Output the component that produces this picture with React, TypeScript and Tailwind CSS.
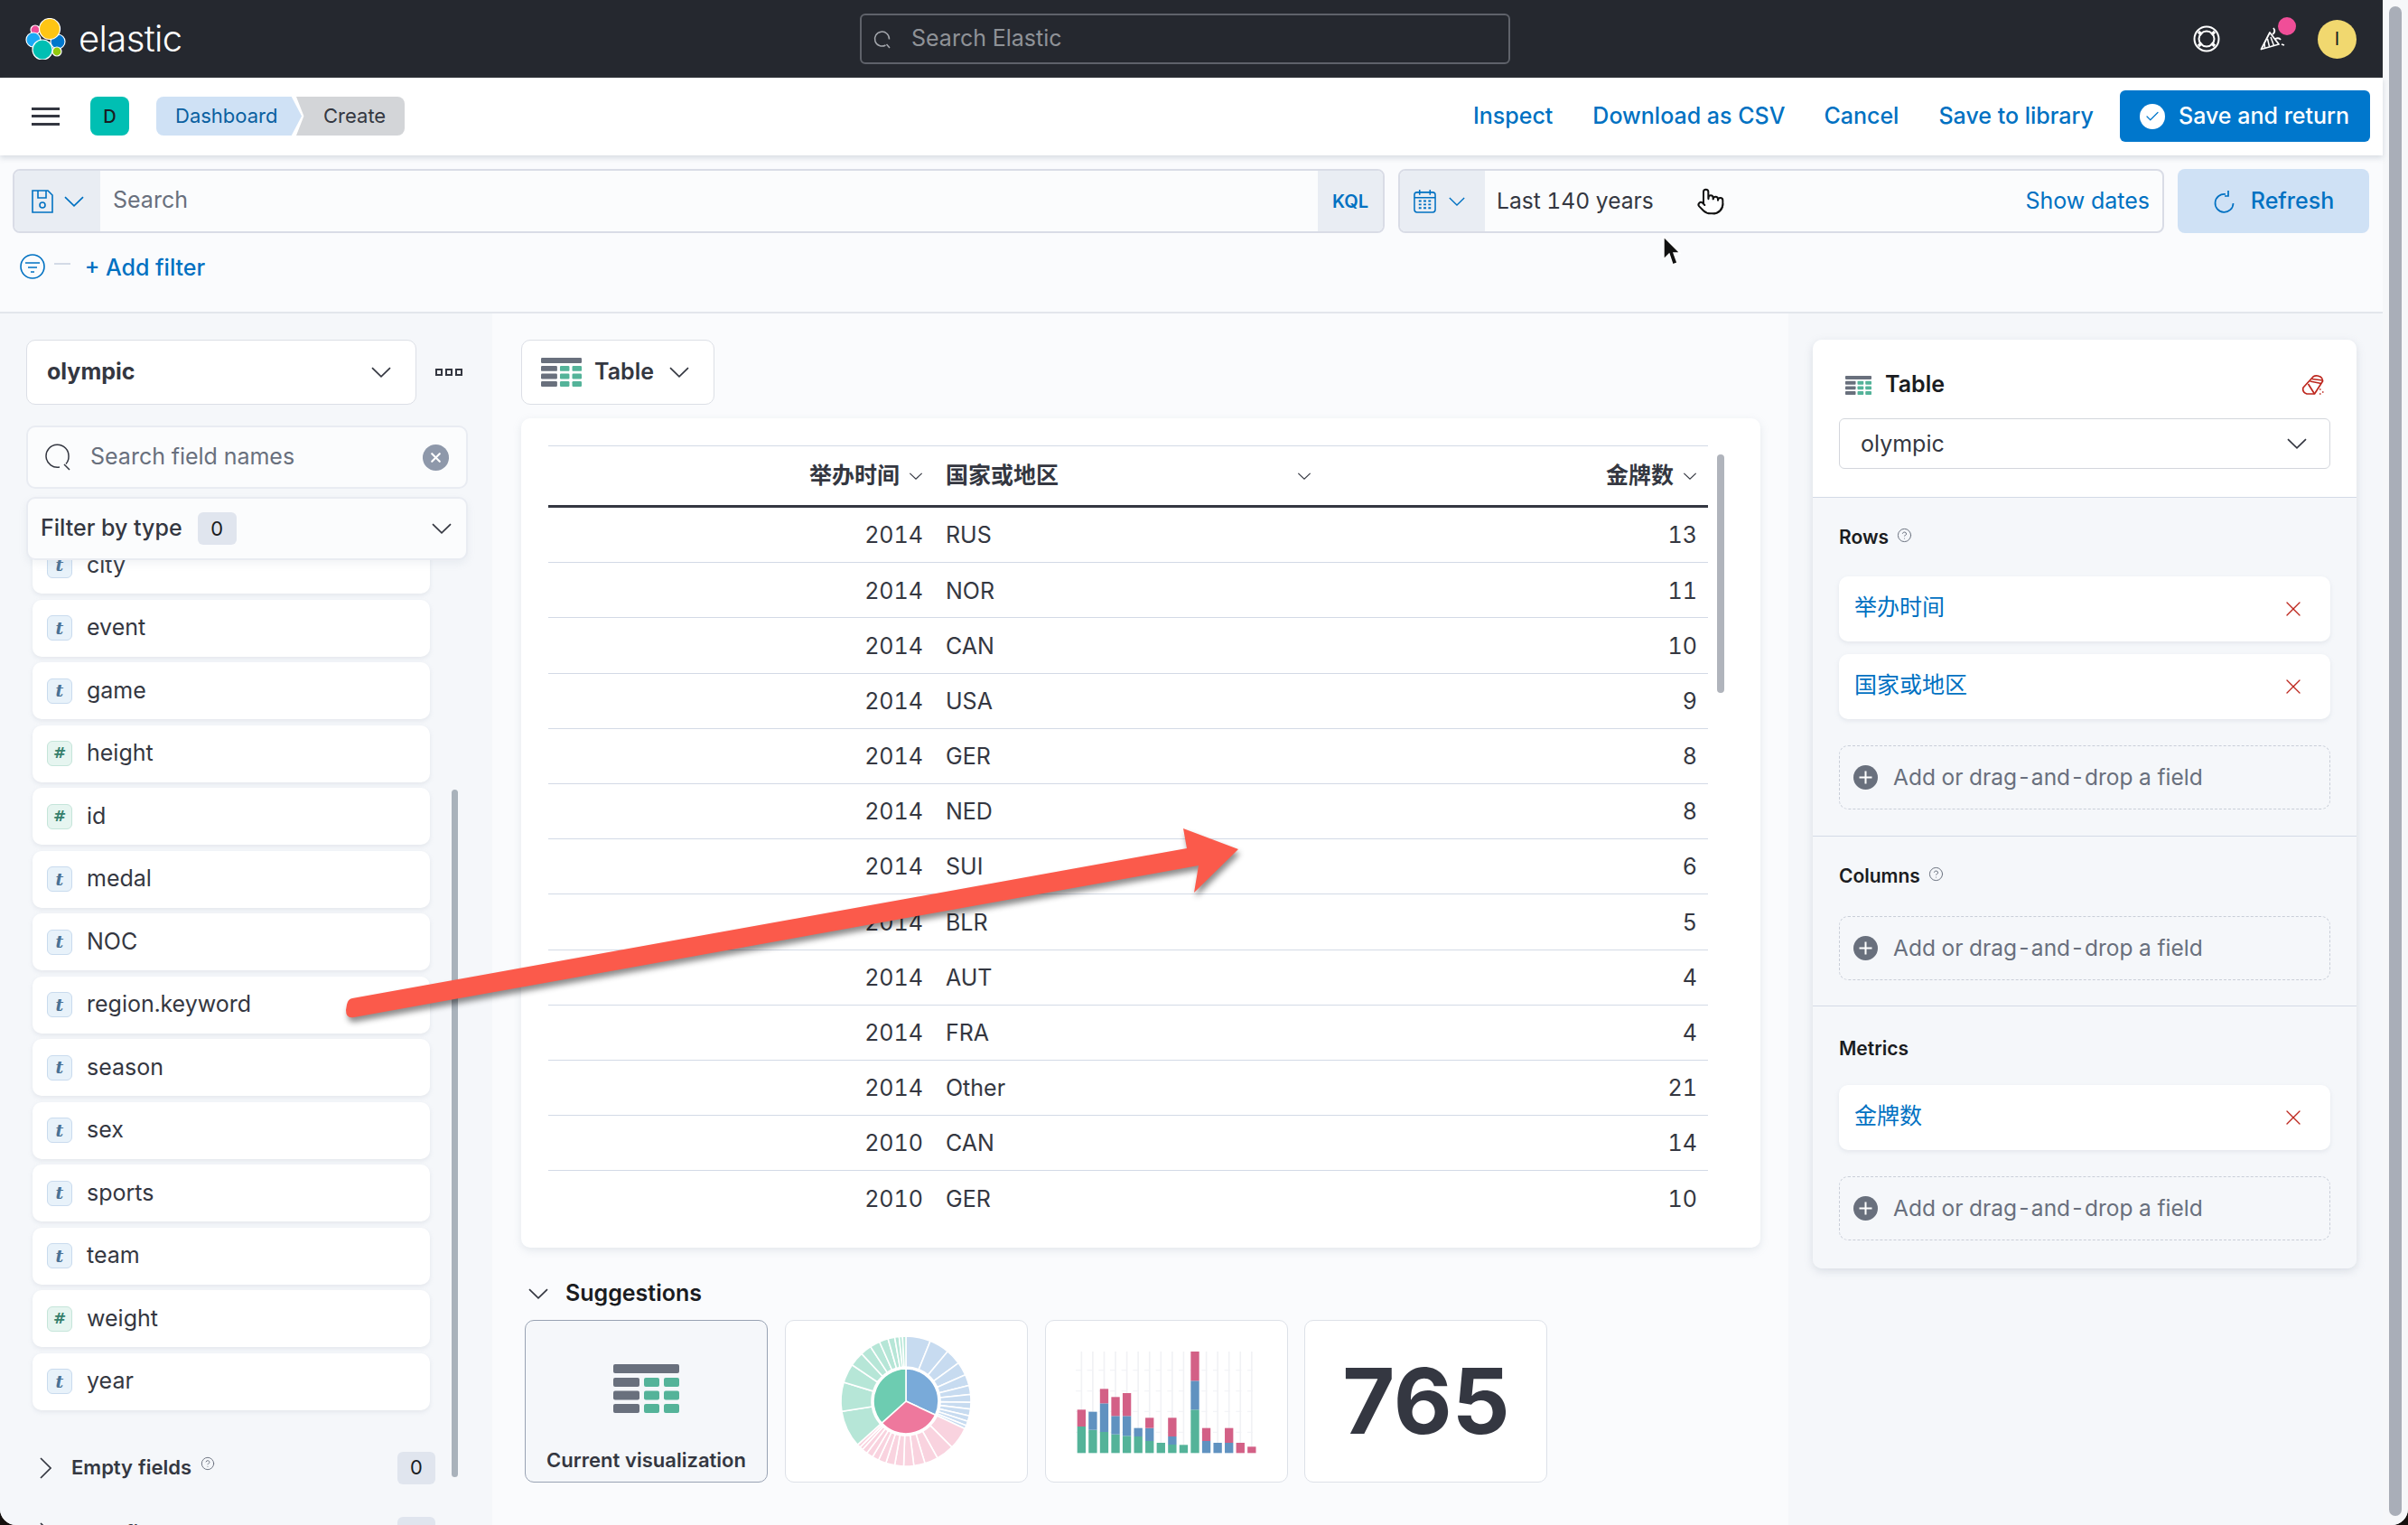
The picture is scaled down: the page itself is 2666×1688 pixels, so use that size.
import React from "react";
import { X, CircleHelp, Check, Pointer } from "lucide-react";

const fields: [string, string][] = [
  ["city", "t"], ["event", "t"], ["game", "t"], ["height", "#"], ["id", "#"], ["medal", "t"], ["NOC", "t"],
  ["region.keyword", "t"], ["season", "t"], ["sex", "t"], ["sports", "t"], ["team", "t"], ["weight", "#"], ["year", "t"],
];
const rows: [string, string, string][] = [
  ["2014", "RUS", "13"], ["2014", "NOR", "11"], ["2014", "CAN", "10"], ["2014", "USA", "9"], ["2014", "GER", "8"],
  ["2014", "NED", "8"], ["2014", "SUI", "6"], ["2014", "BLR", "5"], ["2014", "AUT", "4"], ["2014", "FRA", "4"],
  ["2014", "Other", "21"], ["2010", "CAN", "14"], ["2010", "GER", "10"],
];

function TableIcon({ className }: { className: string }) {
  return (
    <svg viewBox="0 0 73 54" className={className} preserveAspectRatio="none">
      <rect x="0" y="0" width="73" height="10" rx="2" fill="#69707d" />
      {[15, 29.5, 44].map((y) => (
        <g key={y}>
          <rect x="0" y={y} width="29" height="10" rx="2" fill="#69707d" />
          <rect x="34" y={y} width="17" height="10" rx="2" fill="#54b399" />
          <rect x="56" y={y} width="17" height="10" rx="2" fill="#54b399" />
        </g>
      ))}
    </svg>
  );
}

function Logo() {
  return (
    <svg viewBox="0 0 46 46" className="h-[46px] w-[46px]">
      <g stroke="#fff" strokeWidth="1.2">
        <circle cx="11" cy="13" r="5" fill="#f04e98" />
        <circle cx="9" cy="24" r="8" fill="#1ba9f5" />
        <circle cx="36" cy="26" r="8" fill="#0077cc" />
        <circle cx="35" cy="37" r="5" fill="#93c90e" />
        <circle cx="27" cy="12" r="11.5" fill="#fec514" />
        <circle cx="19" cy="35" r="11" fill="#00bfb3" />
      </g>
    </svg>
  );
}

function polar(r: number, deg: number) {
  const a = ((deg - 90) * Math.PI) / 180;
  return `${(80 + r * Math.cos(a)).toFixed(2)} ${(80 + r * Math.sin(a)).toFixed(2)}`;
}
function arc(r0: number, r1: number, a0: number, a1: number) {
  const large = a1 - a0 > 180 ? 1 : 0;
  return `M${polar(r0, a0)} L${polar(r1, a0)} A${r1} ${r1} 0 ${large} 1 ${polar(r1, a1)} L${polar(r0, a1)} A${r0} ${r0} 0 ${large} 0 ${polar(r0, a0)} Z`;
}
function Donut() {
  const groups: { start: number; color: string; w: number[] }[] = [
    { start: 0, color: "#c7dbf0", w: [22, 18, 14, 12, 10, 8, 7, 6, 6, 5, 4, 3] },
    { start: 115, color: "#f9d3df", w: [20, 16, 12, 10, 9, 8, 8, 7, 6, 6, 5, 3, 3] },
    { start: 228, color: "#b6e6d7", w: [33, 26, 17, 13, 10, 9, 8, 6, 4, 3, 3] },
  ];
  const segs: React.ReactElement[] = [];
  groups.forEach((g) => {
    let a = g.start;
    g.w.forEach((w, i) => {
      segs.push(<path key={`${g.start}-${i}`} d={arc(38, 72, a, a + w)} fill={g.color} stroke="#fff" strokeWidth="1.6" />);
      a += w;
    });
  });
  return (
    <svg viewBox="0 0 160 160" className="h-[160px] w-[160px]">
      {segs}
      <path d={arc(0.01, 36, 0, 115)} fill="#79aad9" stroke="#fff" strokeWidth="1.6" />
      <path d={arc(0.01, 36, 115, 228)} fill="#ee789d" stroke="#fff" strokeWidth="1.6" />
      <path d={arc(0.01, 36, 228, 360)} fill="#6dccb1" stroke="#fff" strokeWidth="1.6" />
    </svg>
  );
}

function Bars() {
  const data = [
    [88, 0, 56], [77, 60, 0], [70, 95, 48], [62, 61, 63], [57, 66, 76], [55, 28, 0], [40, 43, 34], [34, 0, 0],
    [28, 27, 62], [27, 0, 0], [144, 96, 97], [0, 40, 43], [0, 34, 0], [0, 34, 49], [0, 0, 34], [0, 0, 21],
  ];
  const base = 382;
  return (
    <svg viewBox="0 0 780 420" className="h-[140px] w-[260px]">
      {[107, 176, 244, 313].map((y) => (
        <line key={y} x1="90" x2="690" y1={y} y2={y} stroke="#f3f4f7" strokeWidth="4" strokeDasharray="18 20" />
      ))}
      {data.map((_, i) => (
        <line key={i} x1={109 + i * 37.7} x2={109 + i * 37.7} y1="45" y2={base} stroke="#f1f2f5" strokeWidth="5" />
      ))}
      {data.map(([g, b, r], i) => {
        const x = 95 + i * 37.7;
        return (
          <g key={i}>
            <rect x={x} y={base - g} width="28" height={g} fill="#54b399" />
            <rect x={x} y={base - g - b} width="28" height={b} fill="#6092c0" />
            <rect x={x} y={base - g - b - r} width="28" height={r} fill="#d36086" />
          </g>
        );
      })}
    </svg>
  );
}

function Help({ className }: { className: string }) {
  return <CircleHelp className={className} strokeWidth={1.4} color="#69707d" />;
}

function Chevron({ className, color = "#343741" }: { className: string; color?: string }) {
  return (
    <svg viewBox="0 0 22 12" className={className} fill="none" stroke={color} strokeWidth="1.7">
      <path d="M1 1.2 L11 10.8 L21 1.2" />
    </svg>
  );
}

function AddField() {
  return (
    <div className="flex h-[71px] items-center rounded-[10px] border border-dashed border-[#c9ced8] pl-[15px]">
      <svg viewBox="0 0 27 27" className="h-[27px] w-[27px]">
        <circle cx="13.5" cy="13.5" r="13.5" fill="#69707d" />
        <path d="M13.5 6.5v14M6.5 13.5h14" stroke="#fff" strokeWidth="2" />
      </svg>
      <span className="ml-[17px] text-[24.5px] text-[#69707d]">Add or drag-and-drop a field</span>
    </div>
  );
}

function FieldPill({ label }: { label: string }) {
  return (
    <div className="flex h-[72px] items-center justify-between rounded-[10px] bg-white pl-[17px] pr-[27px] shadow-[0_2px_5px_rgba(152,162,179,0.18)]">
      <span className="-mt-[2px] text-[25px] text-[#0071c2]">{label}</span>
      <X className="h-[28px] w-[28px]" color="#bd271e" strokeWidth={1.1} />
    </div>
  );
}

function PanelLabel({ label, help }: { label: string; help?: boolean }) {
  return (
    <div className="flex h-[28px] items-center text-[21px] font-semibold text-[#1a1c21]">
      {label}
      {help && <Help className="ml-[9px] -mt-[6px] h-[17px] w-[17px]" />}
    </div>
  );
}

function HeaderCell({ label, className, chevron }: { label: string; className: string; chevron: string }) {
  return (
    <div className={className}>
      <span className="text-[25px] font-semibold text-[#343741]">{label}</span>
      <Chevron className={chevron} />
    </div>
  );
}

export default function App() {
  return (
    <div className="relative h-[1688px] w-[2666px] overflow-hidden bg-[#15100e] font-[Inter,'Noto_Sans_CJK_SC',sans-serif] tabular-nums text-[#343741]">
      <div className="flex h-full w-full overflow-hidden rounded-b-[18px] bg-[#f6f7f9]">
        <div className="flex h-full w-[2638px] flex-col">
          {/* top bar */}
          <header className="flex h-[86px] shrink-0 items-center bg-[#25282f]">
            <div className="flex w-[952px] items-center pl-[28px]">
              <Logo />
              <span className="ml-[13px] text-[40px] font-light leading-none tracking-[-0.6px] text-white">elastic</span>
            </div>
            <div className="flex h-[56px] w-[720px] items-center rounded-[6px] border-2 border-[#5f626a] pl-[12px]">
              <svg viewBox="0 0 24 24" className="h-[24px] w-[24px]" fill="none" stroke="#a4a7ad" strokeWidth="1.5">
                <path d="M14.5 19a8 8 0 1 1 4-6.5M15.5 18l3.5 4" />
              </svg>
              <span className="ml-[19px] text-[25px] text-[#8f9297]">Search Elastic</span>
            </div>
            <div className="flex flex-1 items-center justify-end">
              <svg viewBox="0 0 30 30" className="h-[30px] w-[30px]" fill="none" stroke="#fff" strokeWidth="2">
                <circle cx="15" cy="15" r="13.5" />
                <circle cx="15" cy="15" r="8.5" />
                <path d="M6 7l3.5 3.5M24 7l-3.5 3.5M6 23l3.5-3.5M24 23l-3.5-3.5" strokeWidth="3.2" />
              </svg>
              <div className="relative ml-[44px] h-[26px] w-[28px]">
                <svg viewBox="0 0 28 26" className="h-[26px] w-[28px]" fill="none" stroke="#fff" strokeWidth="1.8" strokeLinejoin="round">
                  <path d="M1.5 24.5 L11 6 L21 19 Z" />
                  <path d="M5.5 23 L5 17 M10.5 21.5 L8.5 13 M15.5 20.5 L12 11" strokeWidth="1.5" />
                  <path d="M14 8 q4-3 1-7 M17 13 q4-2 6 1 M24 19 l3 1" />
                </svg>
                <span className="absolute -right-[12px] -top-[11px] h-[20px] w-[20px] rounded-full bg-[#f04e98]" />
              </div>
              <div className="ml-[36px] mr-[29px] flex h-[43px] w-[43px] items-center justify-center rounded-full bg-[#f1d86f] text-[20px] text-[#1a1c21]">I</div>
            </div>
          </header>

          {/* app nav */}
          <nav className="z-10 flex h-[86px] shrink-0 items-center bg-white pb-[1px] pl-[35px] pr-[14px] shadow-[0_3px_6px_rgba(152,162,179,0.35)]">
            <div className="flex h-[20px] w-[31px] flex-col justify-between">
              <span className="h-[3px] bg-[#343741]" />
              <span className="h-[3px] bg-[#343741]" />
              <span className="h-[3px] bg-[#343741]" />
            </div>
            <div className="ml-[34px] flex h-[43px] w-[43px] items-center justify-center rounded-[8px] bg-[#00bfb3] text-[20px] font-medium text-[#1a1c21]">D</div>
            <div className="ml-[30px] flex h-[43px] items-center text-[22px]">
              <div className="flex h-full w-[161px] items-center rounded-l-[8px] bg-[#cfe1f5] pl-[21px] text-[#0a5fa0] [clip-path:polygon(0_0,93%_0,100%_50%,93%_100%,0_100%)]">Dashboard</div>
              <div className="-ml-[6px] flex h-full w-[120px] items-center rounded-r-[8px] bg-[#d3d5d8] pl-[30px] text-[#343741] [clip-path:polygon(0_0,100%_0,100%_100%,0_100%,7%_50%)]">Create</div>
            </div>
            <div className="ml-auto flex items-center text-[25px] font-medium text-[#0071c2]">
              <span>Inspect</span>
              <span className="ml-[44px]">Download as CSV</span>
              <span className="ml-[43px]">Cancel</span>
              <span className="ml-[44px]">Save to library</span>
              <button className="ml-[29px] flex h-[57px] w-[277px] items-center rounded-[6px] bg-[#0077cc] pl-[22px] font-medium text-white">
                <span className="flex h-[28px] w-[28px] items-center justify-center rounded-full bg-white">
                  <Check className="h-[18px] w-[18px]" color="#0077cc" strokeWidth={1.6} />
                </span>
                <span className="ml-[15px]">Save and return</span>
              </button>
            </div>
          </nav>

          {/* query + filter */}
          <div className="h-[175px] shrink-0 border-b-2 border-[#e3e6ec] bg-[#fafbfd]">
            <div className="mt-[15px] flex h-[71px] gap-[15px] pl-[14px]">
              <div className="flex w-[1519px] overflow-hidden rounded-[8px] border-2 border-[#d9dce6] bg-[#fbfcfd]">
                <div className="flex w-[95px] items-center justify-center gap-[12px] bg-[#e9edf3]">
                  <svg viewBox="0 0 24 26" className="h-[26px] w-[24px]" fill="none" stroke="#0071c2" strokeWidth="1.6">
                    <path d="M1 1h17l5 5v19H1zM7 1v8h9V1" />
                    <circle cx="12" cy="17" r="3" />
                  </svg>
                  <Chevron className="h-[12px] w-[22px]" color="#0071c2" />
                </div>
                <div className="flex flex-1 items-center pb-[2px] pl-[14px] text-[25px] text-[#69707d]">Search</div>
                <div className="flex w-[72px] items-center justify-center bg-[#e9edf3] text-[20px] font-semibold text-[#0071c2]">KQL</div>
              </div>
              <div className="flex w-[848px] overflow-hidden rounded-[8px] border-2 border-[#d9dce6] bg-[#fbfcfd]">
                <div className="flex w-[94px] items-center gap-[14px] bg-[#e9edf3] pl-[15px]">
                  <svg viewBox="0 0 26 28" className="h-[27px] w-[25px]" fill="none" stroke="#0071c2" strokeWidth="1.6">
                    <rect x="1" y="4" width="24" height="23" rx="3" />
                    <path d="M1 10h24M7 1v6M19 1v6" />
                    <path d="M6 14h3M11.5 14h3M17 14h3M6 18h3M11.5 18h3M17 18h3M6 22h3M11.5 22h3M17 22h3" strokeWidth="2" />
                  </svg>
                  <Chevron className="h-[10px] w-[18px]" color="#0071c2" />
                </div>
                <div className="flex flex-1 items-center justify-between pl-[13px] pr-[14px] text-[25px]">
                  <span className="text-[24.6px] text-[#343741]">Last 140 years</span>
                  <span className="text-[#0071c2]">Show dates</span>
                </div>
              </div>
              <button className="flex h-[71px] w-[212px] items-center justify-center gap-[18px] rounded-[8px] bg-[#cfe1f5] text-[25px] font-medium text-[#0071c2]">
                <svg viewBox="0 0 24 26" className="h-[26px] w-[24px]" fill="none" stroke="#0071c2" strokeWidth="1.7">
                  <path d="M14 5 A10 10 0 1 0 22.5 15" />
                  <path d="M17 1 V7 H13" />
                </svg>
                Refresh
              </button>
            </div>
            <div className="flex h-[73px] items-center pl-[22px]">
              <svg viewBox="0 0 28 28" className="h-[28px] w-[28px]" fill="none" stroke="#0071c2" strokeWidth="1.6">
                <circle cx="14" cy="14" r="13" />
                <path d="M6 10h16M9 15h10M12 20h4" />
              </svg>
              <span className="ml-[10px] -mt-[6px] h-[2px] w-[18px] bg-[#d3dae6]" />
              <span className="ml-[16px] mt-[4px] text-[25px] font-medium text-[#0071c2]">+ Add filter</span>
            </div>
          </div>

          {/* workspace */}
          <main className="flex min-h-0 flex-1">
            {/* fields */}
            <aside className="relative flex w-[545px] shrink-0 flex-col overflow-hidden bg-[#f5f7fa] pl-[29px] pt-[29px]">
              <div className="flex shrink-0 items-center">
                <div className="flex h-[72px] w-[432px] items-center justify-between rounded-[10px] border border-[#dcdfe6] bg-white pl-[22px] pr-[27px]">
                  <span className="text-[25px] font-bold text-[#343741]">olympic</span>
                  <Chevron className="h-[12px] w-[22px]" />
                </div>
                <div className="ml-[21px] flex gap-[3px]">
                  <span className="h-[8px] w-[8px] border-2 border-[#343741]" />
                  <span className="h-[8px] w-[8px] border-2 border-[#343741]" />
                  <span className="h-[8px] w-[8px] border-2 border-[#343741]" />
                </div>
              </div>
              <div className="z-10 mt-[23px] flex h-[70px] w-[489px] shrink-0 items-center rounded-[10px] border-2 border-[#e9ecf2] bg-[#fbfcfd] pl-[18px] pr-[19px]">
                <svg viewBox="0 0 30 30" className="h-[30px] w-[30px]" fill="none" stroke="#343741" strokeWidth="1.5">
                  <path d="M17 26A12.5 12.5 0 1 1 27 14.5c0 3-1 6-3 8M22 23l6 6" />
                </svg>
                <span className="ml-[21px] text-[25px] text-[#69707d]">Search field names</span>
                <span className="ml-auto flex h-[29px] w-[29px] items-center justify-center rounded-full bg-[#8e98aa]">
                  <X className="h-[17px] w-[17px]" color="#fff" strokeWidth={3} />
                </span>
              </div>
              <div className="z-10 mt-[9px] flex h-[70px] w-[489px] shrink-0 items-center rounded-[10px] border-2 border-[#e9ecf2] bg-[#fbfcfd] pl-[14px] pr-[16px] shadow-[0_4px_8px_rgba(152,162,179,0.12)]">
                <span className="text-[25px] font-medium">Filter by type</span>
                <span className="ml-[17px] flex h-[36px] w-[43px] items-center justify-center rounded-[6px] bg-[#e0e5ee] text-[22px] text-[#1a1c21]">0</span>
                <Chevron className="ml-auto h-[12px] w-[22px]" />
              </div>
              <div className="-mt-[26px] flex shrink-0 flex-col gap-[6.5px] pl-[7px]">
                {fields.map(([name, type]) => (
                  <div key={name} className="flex h-[63px] w-[440px] shrink-0 items-center rounded-[10px] bg-white pl-[16px] shadow-[0_2px_5px_rgba(152,162,179,0.18)]">
                    <span
                      className={
                        type === "t"
                          ? "flex h-[28px] w-[28px] items-center justify-center rounded-[6px] border border-[#c9dbee] bg-[#e8f2fa] font-['DejaVu_Serif',serif] text-[19px] font-bold italic text-[#4a7194]"
                          : "flex h-[28px] w-[28px] items-center justify-center rounded-[6px] border border-[#c5e5da] bg-[#e6f5f0] font-['DejaVu_Serif',serif] text-[17px] font-bold italic text-[#35806c]"
                      }
                    >
                      {type}
                    </span>
                    <span className="ml-[16px] text-[25px] text-[#343741]">{name}</span>
                  </div>
                ))}
              </div>
              <div className="ml-[15px] mt-[46px] flex h-[36px] w-[438px] shrink-0 items-center">
                <svg viewBox="0 0 13 24" className="h-[24px] w-[13px]" fill="none" stroke="#343741" strokeWidth="1.7">
                  <path d="M1 1 L12 12 L1 23" />
                </svg>
                <span className="ml-[22px] text-[22px] font-semibold">Empty fields</span>
                <Help className="ml-[10px] -mt-[10px] h-[16px] w-[16px]" />
                <span className="ml-auto flex h-[36px] w-[42px] items-center justify-center rounded-[6px] bg-[#e0e5ee] text-[22px] text-[#1a1c21]">0</span>
              </div>
              <div className="ml-[15px] mt-[36px] flex h-[36px] w-[438px] shrink-0 items-center">
                <svg viewBox="0 0 13 24" className="h-[24px] w-[13px]" fill="none" stroke="#343741" strokeWidth="1.7">
                  <path d="M1 1 L12 12 L1 23" />
                </svg>
                <span className="ml-[22px] text-[22px] font-semibold">Meta fields</span>
                <span className="ml-auto flex h-[36px] w-[42px] items-center justify-center rounded-[6px] bg-[#e0e5ee] text-[22px] text-[#1a1c21]">0</span>
              </div>
              <span className="absolute left-[500px] top-[527px] h-[761px] w-[7px] rounded-full bg-[#a9b2bb]" />
            </aside>

            {/* canvas */}
            <section className="flex w-[1435px] shrink-0 flex-col overflow-hidden bg-[#fafbfd] pl-[32px] pt-[29px]">
              <div className="flex h-[72px] w-[214px] shrink-0 items-center rounded-[10px] border border-[#dcdfe6] bg-white pl-[21px]">
                <TableIcon className="h-[32px] w-[45px]" />
                <span className="ml-[14px] text-[25px] font-semibold">Table</span>
                <Chevron className="ml-[17px] h-[12px] w-[22px]" />
              </div>
              <div className="relative mt-[15px] h-[918px] w-[1372px] shrink-0 overflow-hidden rounded-[10px] bg-white px-[30px] pt-[30px] shadow-[0_3px_10px_rgba(152,162,179,0.22)]">
                <div className="w-[1284px]">
                  <div className="grid h-[69px] grid-cols-[427px_430px_427px] border-y border-b-[3px] border-t-[#d3dae6] border-b-[#343741]">
                    <HeaderCell label="举办时间" className="flex items-center justify-end pr-[12px]" chevron="ml-[10px] h-[8px] w-[16px]" />
                    <div className="flex items-center justify-between pl-[13px] pr-[12px]">
                      <span className="text-[25px] font-semibold">国家或地区</span>
                      <Chevron className="h-[8px] w-[16px]" />
                    </div>
                    <HeaderCell label="金牌数" className="flex items-center justify-end pr-[12px]" chevron="ml-[10px] h-[8px] w-[16px]" />
                  </div>
                  {rows.map(([y, c, n], i) => (
                    <div
                      key={i}
                      className={
                        i < rows.length - 1
                          ? "grid h-[61.2px] grid-cols-[427px_430px_427px] items-center border-b border-[#d3dae6] pt-[2px] text-[25px]"
                          : "grid h-[61.2px] grid-cols-[427px_430px_427px] items-center pt-[2px] text-[25px]"
                      }
                    >
                      <span className="pr-[12px] text-right">{y}</span>
                      <span className="pl-[13px]">{c}</span>
                      <span className="pr-[12px] text-right">{n}</span>
                    </div>
                  ))}
                </div>
                <span className="absolute left-[1324px] top-[40px] h-[264px] w-[8px] rounded-full bg-[#b0b4bc]" />
              </div>
              <div className="mt-[36px] flex h-[30px] shrink-0 items-center pl-[8px]">
                <Chevron className="h-[12px] w-[22px]" />
                <span className="ml-[19px] text-[25px] font-semibold text-[#1a1c21]">Suggestions</span>
              </div>
              <div className="ml-[4px] mt-[14px] flex gap-[18.8px]">
                <div className="flex h-[180px] w-[269px] flex-col items-center rounded-[10px] border border-[#98a2b3] bg-[#f5f7fa] pt-[48px]">
                  <TableIcon className="h-[54px] w-[73px]" />
                  <span className="mt-[36px] text-[22px] font-semibold">Current visualization</span>
                </div>
                <div className="flex h-[180px] w-[269px] items-center justify-center rounded-[10px] border border-[#dde1e8] bg-white"><Donut /></div>
                <div className="flex h-[180px] w-[269px] items-center justify-center rounded-[10px] border border-[#dde1e8] bg-white"><Bars /></div>
                <div className="flex h-[180px] w-[269px] items-center justify-center rounded-[10px] border border-[#dde1e8] bg-white text-[100px] font-bold normal-nums leading-none text-[#343741]">765</div>
              </div>
            </section>

            {/* config */}
            <section className="flex-1 bg-[#f5f7fa] pl-[27px] pt-[29px]">
              <div className="h-[1028px] w-[602px] overflow-hidden rounded-[10px] shadow-[0_3px_10px_rgba(152,162,179,0.3)]">
                <div className="h-[175px] border-b border-[#d3dae6] bg-white px-[29px] pt-[36px]">
                  <div className="flex h-[28px] items-center">
                    <TableIcon className="ml-[7px] h-[21px] w-[29px]" />
                    <span className="ml-[15px] text-[25px] font-semibold text-[#1a1c21]">Table</span>
                    <svg viewBox="0 0 26 22" className="ml-auto mr-[6px] h-[22px] w-[26px]" fill="none" stroke="#bd271e" strokeWidth="1.7" strokeLinejoin="round">
                      <path d="M2 14 L13 2 Q15 0.5 18 1 L21 2 Q24 4 23.5 7 L14.5 21 H6 Q0.5 19 2 14 Z" />
                      <path d="M11.5 4.5 L23.5 6 M9.5 7 L22 9.5 M7.5 10 L14.5 21" />
                      <path d="M20 16h1.5M23 19h1.5M20 21h1.5" />
                    </svg>
                  </div>
                  <div className="mt-[23px] flex h-[56px] items-center justify-between rounded-[6px] border border-[#d3d6dc] pl-[23px] pr-[25px]">
                    <span className="pt-[1px] text-[25px]">olympic</span>
                    <Chevron className="h-[12px] w-[22px]" />
                  </div>
                </div>
                <div className="border-b border-[#d3dae6] bg-[#f5f7fa] px-[29px] pb-[29px] pt-[30px]">
                  <PanelLabel label="Rows" help />
                  <div className="mt-[29px] flex flex-col gap-[14px]">
                    <FieldPill label="举办时间" />
                    <FieldPill label="国家或地区" />
                  </div>
                  <div className="mt-[29px]"><AddField /></div>
                </div>
                <div className="border-b border-[#d3dae6] bg-[#f5f7fa] px-[29px] pb-[28px] pt-[30px]">
                  <PanelLabel label="Columns" help />
                  <div className="mt-[30px]"><AddField /></div>
                </div>
                <div className="h-[290px] bg-[#f5f7fa] px-[29px] pt-[33px]">
                  <PanelLabel label="Metrics" />
                  <div className="mt-[26px]"><FieldPill label="金牌数" /></div>
                  <div className="mt-[29px]"><AddField /></div>
                </div>
              </div>
            </section>
          </main>
        </div>

        {/* page scrollbar */}
        <div className="flex-1 bg-[#f6f7f9] pl-[7px] pt-[7px]">
          <div className="h-[1671px] w-[14px] rounded-full bg-[#a9aeb8]" />
        </div>
      </div>

      {/* annotation arrow */}
      <svg viewBox="0 0 2666 1688" className="pointer-events-none absolute left-0 top-0 h-[1688px] w-[2666px] drop-shadow-[2px_5px_3px_rgba(0,0,0,0.45)]">
        <path
          d="M390 1105 L1314 939 L1310 917 L1371 940 L1322 988 L1327 958 L392 1126 Q383 1128 383 1118 L384 1112 Q385 1106 390 1105 Z"
          fill="#fb5a4b"
        />
      </svg>

      {/* mouse pointers */}
      <Pointer className="pointer-events-none absolute left-[1878px] top-[207px] h-[32px] w-[32px]" color="#111" fill="#fff" strokeWidth={1.5} />
      <svg viewBox="0 0 20 34" className="pointer-events-none absolute left-[1841px] top-[261px] h-[34px] w-[20px]">
        <path d="M1 1 V26 L7 20 L11 32 L16 30 L12 19 H19 Z" fill="#111" stroke="#fff" strokeWidth="1.4" />
      </svg>
    </div>
  );
}
